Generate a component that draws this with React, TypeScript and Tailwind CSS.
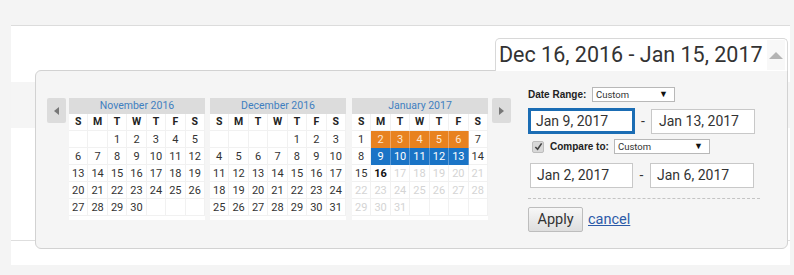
import React from "react";

type Cell = number | null;

const nov: Cell[][] = [
  [null, null, 1, 2, 3, 4, 5],
  [6, 7, 8, 9, 10, 11, 12],
  [13, 14, 15, 16, 17, 18, 19],
  [20, 21, 22, 23, 24, 25, 26],
  [27, 28, 29, 30, null, null, null],
];
const dec: Cell[][] = [
  [null, null, null, null, 1, 2, 3],
  [4, 5, 6, 7, 8, 9, 10],
  [11, 12, 13, 14, 15, 16, 17],
  [18, 19, 20, 21, 22, 23, 24],
  [25, 26, 27, 28, 29, 30, 31],
];
const jan: Cell[][] = [
  [1, 2, 3, 4, 5, 6, 7],
  [8, 9, 10, 11, 12, 13, 14],
  [15, 16, 17, 18, 19, 20, 21],
  [22, 23, 24, 25, 26, 27, 28],
  [29, 30, 31, null, null, null, null],
];

const dayNames = ["S", "M", "T", "W", "T", "F", "S"];

function cellClass(month: string, d: Cell): string {
  if (month === "jan" && d !== null) {
    if (d >= 2 && d <= 6) return "bg-[#e8821f] text-[#fde6cf] border-r border-[#f0a868]";
    if (d >= 9 && d <= 13) return "bg-[#1a74c6] text-white border-r border-[#5b9ad6]";
    if (d === 16) return "bg-white text-[#111] font-bold border-r border-b border-[#f1f1f1]";
    if (d > 16) return "bg-white text-[#d4d4d4] border-r border-b border-[#f1f1f1]";
  }
  return "bg-white text-[#333] border-r border-b border-[#f1f1f1]";
}

function Month({ title, rows, id }: { title: string; rows: Cell[][]; id: string }) {
  return (
    <div className="w-[136px] flex flex-col">
      <div className="h-[16px] bg-[#dcdcdc] flex items-center justify-center text-[10.5px] text-[#3f7fc0] leading-none">
        {title}
      </div>
      <div className="bg-white pb-[4px]">
        <div className="grid grid-cols-7 h-[17px]">
          {dayNames.map((n, i) => (
            <div
              key={i}
              className="flex items-center justify-center text-[10.5px] font-bold text-[#222] border-r border-b border-[#f1f1f1]"
            >
              {n}
            </div>
          ))}
        </div>
        {rows.map((r, ri) => (
          <div key={ri} className="grid grid-cols-7 h-[17px]">
            {r.map((d, ci) => (
              <div
                key={ci}
                className={
                  "flex items-center justify-center text-[11px] leading-none " + cellClass(id, d)
                }
              >
                {d ?? ""}
              </div>
            ))}
          </div>
        ))}
      </div>
    </div>
  );
}

function NavBtn({ dir }: { dir: "l" | "r" }) {
  return (
    <div className="w-[19px] h-[25px] bg-[#dcdcdc] rounded-[2px] flex items-center justify-center">
      {dir === "l" ? (
        <div className="w-0 h-0 border-y-[4px] border-y-transparent border-r-[5px] border-r-[#777]" />
      ) : (
        <div className="w-0 h-0 border-y-[4px] border-y-transparent border-l-[5px] border-l-[#777]" />
      )}
    </div>
  );
}

function Select({ w }: { w: string }) {
  return (
    <div
      className={
        w +
        " h-[15px] bg-white border border-[#b8b8b8] flex items-center justify-between pl-[3px] pr-[6px] text-[9.5px] text-[#333] leading-none"
      }
    >
      <span>Custom</span>
      <span className="text-[9px] text-[#111]">▼</span>
    </div>
  );
}

export default function App() {
  return (
    <div className="w-[794px] h-[275px] bg-[#f4f4f4] relative overflow-hidden [font-family:Roboto,'Liberation_Sans',Arial,sans-serif]">
      <div className="h-[25px]" />
      <div className="ml-[11px] w-[779px] h-[240px] bg-white border-t border-[#dcdcdc] flex flex-col">
        <div className="h-[56px]" />
        <div className="h-[46px] bg-[#f5f5f5]" />
        <div className="h-[112px]" />
        <div className="border-t border-[#dedede]" />
      </div>

      {/* Popup */}
      <div className="absolute left-[35px] top-[70px] w-[753px] h-[179px] bg-[#f5f5f5] border border-[#d2d2d2] rounded-[6px] rounded-tr-none flex items-start">
        <div className="mt-[27px] ml-[11px] flex items-start">
          <NavBtn dir="l" />
          <div className="ml-[3px] flex items-start gap-[5px]">
            <Month title="November 2016" rows={nov} id="nov" />
            <Month title="December 2016" rows={dec} id="dec" />
            <div className="ml-[1px]">
              <Month title="January 2017" rows={jan} id="jan" />
            </div>
          </div>
          <div className="ml-[4px]">
            <NavBtn dir="r" />
          </div>
        </div>

        <div className="ml-[17px] mt-[16px] flex flex-col w-[232px]">
          <div className="flex items-center h-[15px]">
            <span className="text-[10px] font-bold text-[#222] [font-family:'Liberation_Sans',Arial,sans-serif] w-[64px]">
              Date Range:
            </span>
            <Select w="w-[83px]" />
          </div>
          <div className="flex items-center mt-[6px]">
            <div className="w-[107px] h-[26px] border-[3px] border-[#1b6db4] bg-white flex items-center pl-[5px] text-[14px] text-[#333]">
              Jan 9, 2017
            </div>
            <span className="w-[16px] text-center text-[14px] text-[#333]">-</span>
            <div className="w-[104px] h-[25px] border border-[#c8c8c8] bg-white flex items-center pl-[7px] text-[14px] text-[#333]">
              Jan 13, 2017
            </div>
          </div>
          <div className="flex items-center h-[15px] mt-[5px]">
            <div className="ml-[4px] w-[12px] h-[12px] rounded-[2px] bg-[#d8d8d8] border border-[#bdbdbd] flex items-center justify-center">
              <svg width="9" height="9" viewBox="0 0 10 10">
                <path d="M1.5 5.5 L4 8 L8.5 1.5" stroke="#444" strokeWidth="1.8" fill="none" />
              </svg>
            </div>
            <span className="ml-[6px] w-[64px] text-[10px] font-bold text-[#222] [font-family:'Liberation_Sans',Arial,sans-serif]">
              Compare to:
            </span>
            <Select w="w-[96px]" />
          </div>
          <div className="flex items-center mt-[9px] ml-[2px]">
            <div className="w-[103px] h-[25px] border border-[#c8c8c8] bg-white flex items-center pl-[6px] text-[14px] text-[#333]">
              Jan 2, 2017
            </div>
            <span className="w-[17px] text-center text-[14px] text-[#333]">-</span>
            <div className="w-[104px] h-[25px] border border-[#c8c8c8] bg-white flex items-center pl-[6px] text-[14px] text-[#333]">
              Jan 6, 2017
            </div>
          </div>
          <div className="mt-[10px] border-t border-dashed border-[#c4c4c4]" />
          <div className="flex items-center mt-[8px]">
            <div className="w-[55px] h-[25px] rounded-[2px] border border-[#bdbdbd] bg-gradient-to-b from-[#f7f7f7] to-[#dedede] flex items-center justify-center text-[14.5px] text-[#333]">
              Apply
            </div>
            <span className="ml-[5px] text-[14.5px] text-[#2c5aa8] underline">cancel</span>
          </div>
        </div>
      </div>

      {/* Date range button */}
      <div className="absolute left-[495px] top-[38px] w-[293px] h-[33px] bg-white border border-[#d8d8d8] border-b-0 rounded-t-[5px] flex items-center justify-between pl-[3px] pr-[2px]">
        <span className="text-[21.5px] text-[#333] leading-none">Dec 16, 2016 - Jan 15, 2017</span>
        <div className="w-[18px] h-[30px] bg-[#f8f8f8] flex items-center justify-center">
          <div className="w-0 h-0 border-x-[7px] border-x-transparent border-b-[7px] border-b-[#b4b4b4]" />
        </div>
      </div>
    </div>
  );
}
